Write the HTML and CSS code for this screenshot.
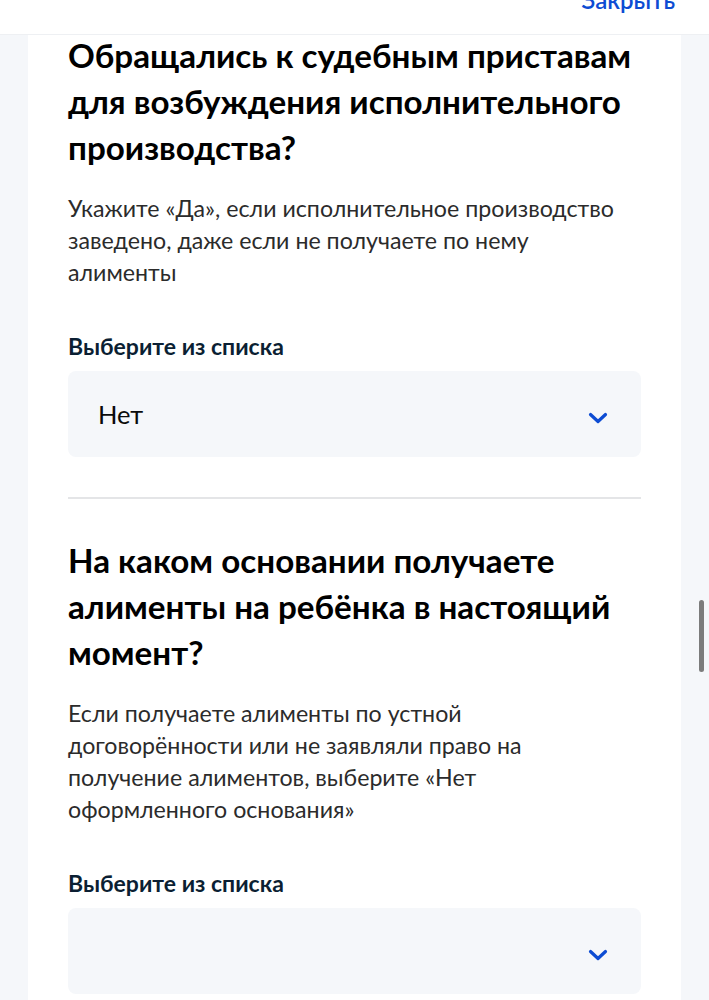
FILE: index.html
```html
<!DOCTYPE html>
<html lang="ru">
<head>
<meta charset="utf-8">
<link rel="stylesheet" href="styles.css">
</head>
<body>
<header class="topbar">
  <span class="close">Закрыть</span>
</header>
<main class="page">
  <section class="card">
    <h2 class="q-title">Обращались к судебным приставам для возбуждения исполнительного производства?</h2>
    <p class="q-hint">Укажите «Да», если исполнительное производство заведено, даже если не получаете по нему алименты</p>
    <div class="field">
      <div class="field-label">Выберите из списка</div>
      <div class="select">
        <span class="select-value">Нет</span>
        <svg class="chevron" width="20" height="12" viewBox="0 0 20 12"><path d="M2.5 2.5 L10 9.5 L17.5 2.5" fill="none" stroke="#0d4cd3" stroke-width="3.2" stroke-linecap="round" stroke-linejoin="round"/></svg>
      </div>
    </div>
    <hr class="divider">
    <h2 class="q-title">На каком основании получаете алименты на ребёнка в настоящий момент?</h2>
    <p class="q-hint">Если получаете алименты по устной договорённости или не заявляли право на получение алиментов, выберите «Нет оформленного основания»</p>
    <div class="field">
      <div class="field-label">Выберите из списка</div>
      <div class="select">
        <span class="select-value"></span>
        <svg class="chevron" width="20" height="12" viewBox="0 0 20 12"><path d="M2.5 2.5 L10 9.5 L17.5 2.5" fill="none" stroke="#0d4cd3" stroke-width="3.2" stroke-linecap="round" stroke-linejoin="round"/></svg>
      </div>
    </div>
  </section>
</main>
<div class="scrollbar"></div>
</body>
</html>
```
FILE: styles.css
```css
html, body {
  margin: 0;
  padding: 0;
  height: 100%;
  overflow: hidden;
}
body {
  font-family: Lato, "Noto Sans", sans-serif;
  background: #f5f7fa;
  color: #0b1f33;
}
.topbar {
  height: 34px;
  background: #fff;
  border-bottom: 1px solid #eef0f3;
  display: flex;
  justify-content: flex-end;
  align-items: flex-start;
  padding-right: 34px;
  overflow: hidden;
}
.close {
  color: #0d4cd3;
  font-size: 24px;
  font-weight: 600;
  line-height: 24px;
  margin-top: -12px;
}
.page {
  padding: 0 28px;
}
.card {
  display: flow-root;
  background: #fff;
  padding: 0 40px 40px;
  min-height: 1000px;
}
.q-title {
  margin: -3px 0 0;
  font-size: 33.2px;
  line-height: 46px;
  font-weight: 700;
  color: #000;
}
.q-hint {
  margin: 22px 0 0;
  max-width: 550px;
  font-size: 23.2px;
  line-height: 32px;
  color: #2b2b2b;
}
.card .q-title + .q-hint + .field {
  margin-top: 44px;
}
.field-label {
  font-size: 23px;
  line-height: 28px;
  font-weight: 700;
  color: #0b1f33;
}
.select {
  margin-top: 11px;
  height: 86px;
  background: #f5f7fa;
  border-radius: 8px;
  display: flex;
  align-items: center;
  justify-content: space-between;
  padding: 0 33px 0 30px;
}
.select-value {
  font-size: 25.5px;
  color: #0b0b0b;
}
.chevron {
  display: block;
  margin-top: 8px;
}
.divider {
  margin: 40px 0 41px;
  border: 0;
  height: 2px;
  background: #e4e5e7;
}
.scrollbar {
  position: absolute;
  left: 699px;
  top: 600px;
  width: 5px;
  height: 72px;
  border-radius: 3px;
  background: #7c7c7c;
}
```
